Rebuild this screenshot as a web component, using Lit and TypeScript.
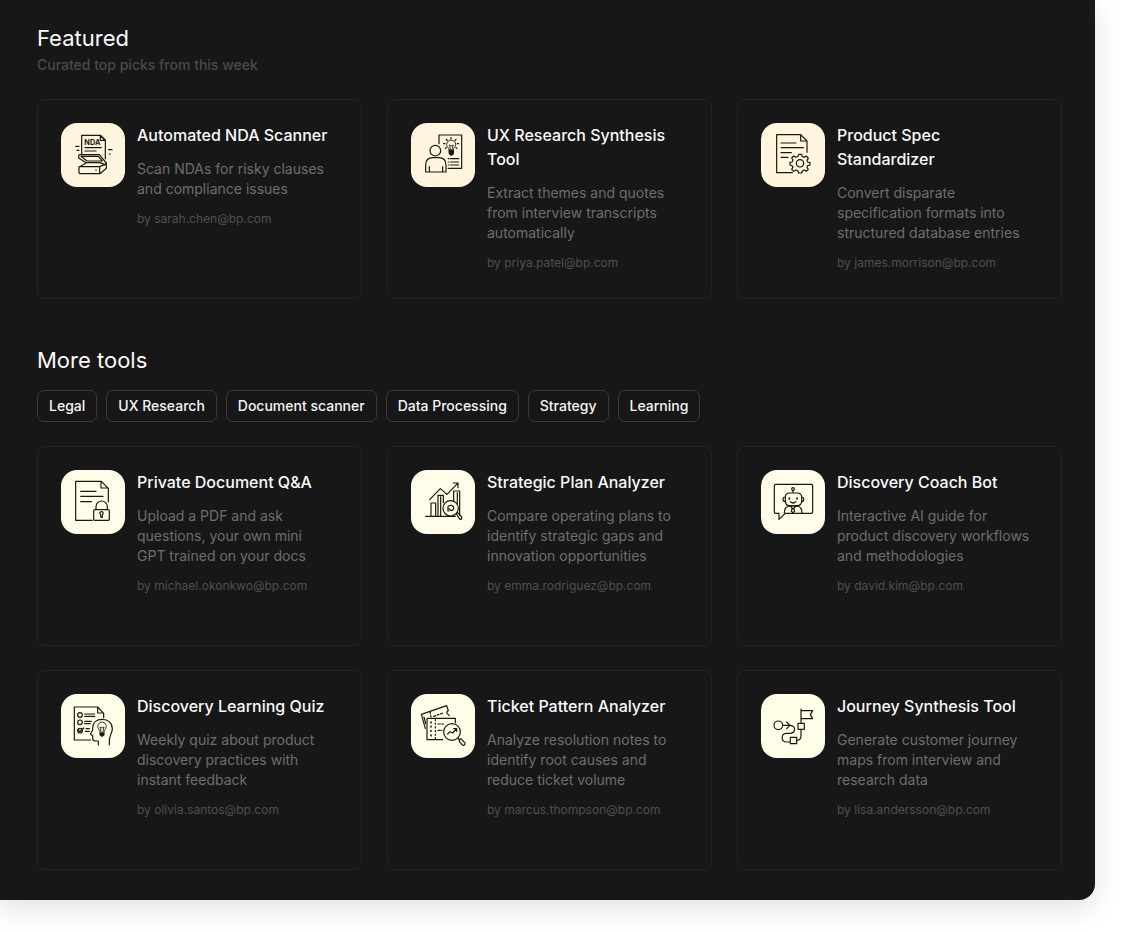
import { LitElement, html, svg, css } from "lit";
import { customElement, property } from "lit/decorators.js";

type Tool = {
  title: string;
  description: string;
  author: string;
  icon: string;
};

// Each drawing sits in a 192-unit square tile; "box" is the part of the drawing that fills the tile.
const icons: Record<string, { box: string; tint: string; art: unknown }> = {
  nda: {
    box: "33 32 192 192",
    tint: "#fff4de",
    art: svg`
      <path d="M95 126V69H152L166 83V139M151 70V84H165Z" />
      <path d="M105 106H154M105 116H138M77 102H87M81 114H87M176 112H186M178 125H181" />
      <text x="103" y="98" font-size="22" font-weight="700">NDA</text>
      <path d="M86 130Q86 127 90 127H148L169 152L165 157L150 151H108L86 137ZM93 132L111 146H157L145 132Z" />
      <path d="M108 152L89 163H148L165 157M169 153V168L150 184H90Q87 184 87 180V163M149 164V184M137 173H139" />`,
  },
  research: {
    box: "35 32 192 192",
    tint: "#fff4de",
    art: svg`
      <path d="M119 94V68H187V168H146" />
      <circle cx="108" cy="115" r="16" />
      <path d="M79 179V158Q79 136 101 136H118Q140 136 140 158V179ZM90 178V163M130 178V163" />
      <path d="M147 139H149M154 139H178M147 149H149M154 149H178M147 158H149M154 158H178" />
      <path d="M149 112C149 105 142 105 142 97A13 13 0 0 1 169 97C169 105 162 105 162 112ZM153 110L150 98L156 101L162 98L158 110" stroke-width="2.6" />
      <path d="M149 114H162V124L156 129L150 124Z" fill="currentColor" />
      <path d="M155 76V80M141 81L144 85M170 81L167 85M133 94H137M174 94H178M138 108L141 106M173 108L170 106" />`,
  },
  spec: {
    box: "31 32 192 192",
    tint: "#fff6dd",
    art: svg`
      <path d="M125 181H78V67H150L169 86V120M150 68V86H168" />
      <path d="M91 92H136M91 106H158M91 121H122M91 135H112" />
      <circle cx="148" cy="153" r="11" />
      <path d="M144 126H153L155 133L161 135L167 131L173 138L169 144L171 149L178 151V158L171 160L169 166L173 171L167 177L161 173L155 176L153 182H144L142 176L136 173L129 177L123 171L127 165L124 160L118 158V151L124 149L127 143L123 137L129 131L136 135L142 132Z" />`,
  },
  lock: {
    box: "33 30 192 192",
    tint: "#fffde9",
    art: svg`
      <path d="M127 181H77V64H154L175 85V126M153 65V84H174" />
      <path d="M92 94H138M92 109H159M92 125H124" />
      <rect x="131" y="149" width="47" height="32" rx="3" />
      <path d="M138 148V140A17 17 0 0 1 172 140V148M152 168V164A5 5 0 1 1 157 164V172H153Z" />`,
  },
  chart: {
    box: "35 30 192 192",
    tint: "#fffde9",
    art: svg`
      <path d="M79 169H168M95 168V129H109V168M116 168V106H132V128M124 110V168M163 122V93H181V166M174 98V130" />
      <path d="M91 119L123 86L143 103L175 70M162 69H176V83" />
      <circle cx="154" cy="145" r="23" fill="#fffde9" />
      <path d="M149 153H146V140Q149 135 156 136Q164 138 163 145Q162 151 156 152L150 147M171 162L175 158L187 171Q189 177 182 178Z" />`,
  },
  bot: {
    box: "31 30 192 192",
    tint: "#fffde9",
    art: svg`
      <path d="M78 160H75Q71 160 71 156V77Q71 73 75 73H182Q186 73 186 77V156Q186 160 182 160H104L85 178V160Z" />
      <circle cx="127" cy="87" r="4" />
      <path d="M127 92V99M104 112Q104 99 117 99H139Q153 99 153 112V123Q153 137 139 137H117Q104 137 104 123ZM103 111Q97 111 97 118T103 125M154 111Q159 111 159 118T154 125" />
      <path d="M116 114V117M139 114V117" stroke-width="5" />
      <path d="M119 125Q127 133 136 125" />
      <path d="M101 159Q101 137 120 138H136Q154 138 154 159M120 139L127 147L135 139M124 146L122 154L127 158L132 154L130 146Z" />`,
  },
  quiz: {
    box: "33 34 192 192",
    tint: "#fffee9",
    art: svg`
      <path d="M122 172H73V73H143L161 92V105M143 74V91H160" />
      <circle cx="90" cy="97" r="7" /><circle cx="90" cy="119" r="7" />
      <path d="M104 94H134M104 101H134M104 116H124M104 123H121M108 138H118M106 146H118" />
      <circle cx="90" cy="144" r="7" /><path d="M84 142L90 147L101 136" stroke-width="4" />
      <path d="M145 187V175H136Q128 175 128 167V159L121 154L128 143V135C128 120 139 110 157 110C174 110 187 121 187 139C187 155 174 158 178 187" />
      <path d="M150 149Q150 143 145 138A13 13 0 1 1 167 138Q162 143 162 149ZM153 147L150 133L156 136L162 133L159 147" stroke-width="2.6" />
      <path d="M150 152H162V156L156 161L150 156Z" fill="currentColor" />`,
  },
  ticket: {
    box: "35 34 192 192",
    tint: "#fffee9",
    art: svg`
      <path d="M78 137L66 95L142 69L147 84Q140 87 144 93L150 99M74 103L79 123" />
      <path d="M92 87L95 103M103 101L134 90" stroke-dasharray="6 5" />
      <path d="M130 171H83V107H168V120" />
      <path d="M95 118V164" stroke-dasharray="2 11" stroke-width="5" />
      <path d="M108 110V168" stroke-dasharray="4 7" />
      <path d="M116 124H133M116 143H128" stroke-dasharray="7 4" />
      <circle cx="158" cy="148" r="25" fill="#fffee9" />
      <path d="M145 154L152 147L160 151L171 139M163 138H172V146M175 166L181 172M181 170Q184 167 187 170L196 180Q199 184 195 187Q191 190 188 186L180 176Q178 173 181 170Z" />`,
  },
  journey: {
    box: "31 34 192 192",
    tint: "#fffee9",
    art: svg`
      <circle cx="83" cy="128" r="13" />
      <path d="M97 128H118M108 118L118 128L108 138M119 128C135 130 137 150 119 152H107C90 153 90 178 108 178H118" />
      <rect x="119" y="164" width="19" height="19" /><rect x="142" y="122" width="19" height="18" />
      <path d="M139 173Q151 172 151 160V141M151 121V79M152 84H186L179 96L186 108H152" />`,
  },
};

const featured: Tool[] = [
  { title: "Automated NDA Scanner", description: "Scan NDAs for risky clauses and compliance issues", author: "sarah.chen@bp.com", icon: "nda" },
  { title: "UX Research Synthesis Tool", description: "Extract themes and quotes from interview transcripts automatically", author: "priya.patel@bp.com", icon: "research" },
  { title: "Product Spec Standardizer", description: "Convert disparate specification formats into structured database entries", author: "james.morrison@bp.com", icon: "spec" },
];

const more: Tool[] = [
  { title: "Private Document Q&A", description: "Upload a PDF and ask questions, your own mini GPT trained on your docs", author: "michael.okonkwo@bp.com", icon: "lock" },
  { title: "Strategic Plan Analyzer", description: "Compare operating plans to identify strategic gaps and innovation opportunities", author: "emma.rodriguez@bp.com", icon: "chart" },
  { title: "Discovery Coach Bot", description: "Interactive AI guide for product discovery workflows and methodologies", author: "david.kim@bp.com", icon: "bot" },
  { title: "Discovery Learning Quiz", description: "Weekly quiz about product discovery practices with instant feedback", author: "olivia.santos@bp.com", icon: "quiz" },
  { title: "Ticket Pattern Analyzer", description: "Analyze resolution notes to identify root causes and reduce ticket volume", author: "marcus.thompson@bp.com", icon: "ticket" },
  { title: "Journey Synthesis Tool", description: "Generate customer journey maps from interview and research data", author: "lisa.andersson@bp.com", icon: "journey" },
];

const categories = ["Legal", "UX Research", "Document scanner", "Data Processing", "Strategy", "Learning"];

@customElement("tool-card")
export class ToolCard extends LitElement {
  @property({ attribute: false }) tool!: Tool;

  static styles = css`
    :host {
      display: block;
      min-width: 0;
    }
    .card {
      box-sizing: border-box;
      height: 100%;
      min-height: 200px;
      display: flex;
      align-items: flex-start;
      gap: 12px;
      padding: 23px 29px 23px 23px;
      border: 1px solid #232323;
      border-radius: 8px;
    }
    .icon {
      flex: none;
      display: block;
      width: 64px;
      height: 64px;
      border-radius: 16px;
      color: #1c180f;
      fill: none;
      stroke: currentColor;
      stroke-width: 3.6;
      stroke-linejoin: round;
      stroke-linecap: round;
    }
    .icon text {
      font-family: Inter, sans-serif;
      fill: currentColor;
      stroke: none;
    }
    .body {
      flex: 1;
      min-width: 0;
    }
    h3,
    p {
      margin: 0;
    }
    .title {
      font-size: 16px;
      font-weight: 500;
      line-height: 24px;
      color: #fafafa;
    }
    .description {
      margin-top: 12px;
      font-size: 14px;
      line-height: 20px;
      color: #6e6e6e;
    }
    .author {
      margin-top: 12px;
      font-size: 12px;
      line-height: 16px;
      color: #4f4f4f;
    }
  `;

  render() {
    const { title, description, author, icon } = this.tool;
    const { box, tint, art } = icons[icon];
    const [x, y] = box.split(" ");
    return html`
      <article class="card">
        <svg class="icon" viewBox=${box} aria-hidden="true">
          <rect x=${x} y=${y} width="192" height="192" fill=${tint} stroke="none"></rect>
          ${art}
        </svg>
        <div class="body">
          <h3 class="title">${title}</h3>
          <p class="description">${description}</p>
          <p class="author">by ${author}</p>
        </div>
      </article>
    `;
  }
}

@customElement("app-root")
export class AppRoot extends LitElement {
  static styles = css`
    :host {
      display: block;
      min-height: 100vh;
      overflow: hidden;
      background: #ffffff;
      font-family: Inter, sans-serif;
      -webkit-font-smoothing: antialiased;
    }
    .panel {
      margin: 0 32px 32px 0;
      padding: 24px 33px 30px 37px;
      border-radius: 0 0 16px 0;
      background: #171717;
      box-shadow: 0 8px 28px rgba(0, 0, 0, 0.12);
    }
    h2,
    p {
      margin: 0;
    }
    .heading {
      font-size: 22px;
      font-weight: 400;
      line-height: 28px;
      color: #fafafa;
    }
    .subheading {
      margin-top: 3px;
      font-size: 14px;
      font-weight: 500;
      line-height: 20px;
      color: #4a4a4a;
    }
    .grid {
      display: grid;
      grid-template-columns: repeat(3, minmax(0, 1fr));
      gap: 24px 25px;
      margin-top: 24px;
    }
    .more {
      margin-top: 47px;
    }
    .filters {
      display: flex;
      flex-wrap: wrap;
      gap: 9px;
      margin-top: 16px;
    }
    .filter {
      height: 32px;
      padding: 0 11px;
      border: 1px solid #3a3a3a;
      border-radius: 7px;
      background: transparent;
      color: #f5f5f5;
      font: 500 14px/20px Inter, sans-serif;
      cursor: pointer;
    }
  `;

  private cards(tools: Tool[]) {
    return html`<div class="grid">${tools.map((tool) => html`<tool-card .tool=${tool}></tool-card>`)}</div>`;
  }

  render() {
    return html`
      <main class="panel">
        <section>
          <h2 class="heading">Featured</h2>
          <p class="subheading">Curated top picks from this week</p>
          ${this.cards(featured)}
        </section>
        <section class="more">
          <h2 class="heading">More tools</h2>
          <div class="filters">
            ${categories.map((name) => html`<button class="filter" type="button">${name}</button>`)}
          </div>
          ${this.cards(more)}
        </section>
      </main>
    `;
  }
}
